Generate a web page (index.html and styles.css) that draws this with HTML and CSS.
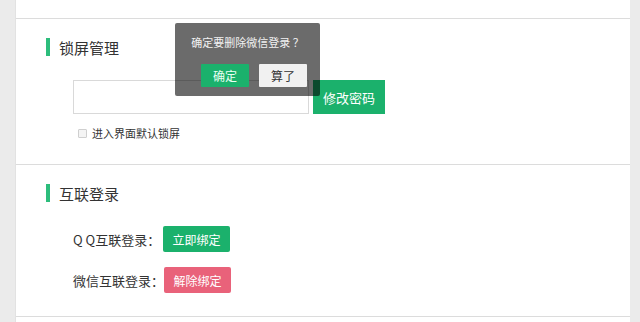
FILE: index.html
```html
<!DOCTYPE html>
<html lang="zh">
<head>
<meta charset="utf-8">
<link rel="stylesheet" href="styles.css">
</head>
<body>
<div class="page">
  <div class="main">
    <div class="top-block"></div>
    <section class="section s-lock">
      <h2 class="sec-title"><span class="bar"></span>锁屏管理</h2>
      <div class="sec-body">
        <div class="pwd-row">
          <input class="pwd-input" type="text">
          <button class="btn btn-green btn-big">修改密码</button>
        </div>
        <label class="chk-row"><span class="chk"></span>进入界面默认锁屏</label>
      </div>
    </section>
    <section class="section s-link">
      <h2 class="sec-title"><span class="bar"></span>互联登录</h2>
      <div class="sec-body">
        <div class="link-row">
          <span class="link-label">Q Q互联登录：</span>
          <button class="btn btn-green btn-small">立即绑定</button>
        </div>
        <div class="link-row row2">
          <span class="link-label">微信互联登录：</span>
          <button class="btn btn-red btn-small">解除绑定</button>
        </div>
      </div>
    </section>
  </div>
  <div class="popup">
    <p class="popup-text">确定要删除微信登录 ？</p>
    <div class="popup-btns">
      <button class="pbtn pbtn-ok">确定</button>
      <button class="pbtn pbtn-cancel">算了</button>
    </div>
  </div>
</div>
</body>
</html>
```

FILE: styles.css
```css
* { box-sizing: border-box; }
html, body { margin: 0; padding: 0; }
body {
  background: #ebebeb;
  font-family: "Noto Sans CJK SC", "Noto Sans", sans-serif;
  color: #333;
  width: 640px;
  height: 322px;
  overflow: hidden;
}
.page {
  position: relative;
  height: 322px;
  display: flex;
}
.main {
  height: 322px;
  background: #fff;
  border-left: 1px solid #e2e2e2;
  margin-left: 15px;
  width: 615px;
}
.top-block {
  height: 19px;
  border-bottom: 1px solid #dcdcdc;
}
.section {
  border-bottom: 1px solid #dcdcdc;
  padding-left: 30px;
}
.s-lock { height: 146px; padding-top: 19px; }
.s-link { height: 152px; padding-top: 19px; }
.sec-title {
  margin: 0;
  height: 18px;
  display: flex;
  align-items: center;
  font-size: 15px;
  font-weight: normal;
  color: #333;
}
.bar {
  width: 4px;
  height: 18px;
  background: #2dbd7c;
  margin-right: 9px;
}
.sec-body { padding-left: 27px; }
.pwd-row {
  margin-top: 24px;
  display: flex;
  gap: 4px;
}
.pwd-input {
  width: 236px;
  height: 34px;
  border: 1px solid #d9d9d9;
  margin: 0;
  padding: 0 6px;
  outline: none;
}
.btn {
  border: none;
  color: #fff;
  font-family: "Noto Sans CJK SC", sans-serif;
  padding: 0;
  margin: 0;
  flex-shrink: 0;
}
.btn-green { background: #1bb16c; }
.btn-red { background: #e9627a; }
.btn-big {
  width: 72px;
  height: 34px;
  font-size: 13px;
}
.btn-small {
  width: 67px;
  height: 26px;
  font-size: 12px;
  border-radius: 2px;
}
.chk-row {
  display: flex;
  align-items: center;
  margin-top: 12px;
  margin-left: 5px;
  font-size: 11px;
  color: #333;
  height: 14px;
}
.chk {
  width: 9px;
  height: 9px;
  border: 1px solid #cfcfcf;
  background: #f4f4f4;
  border-radius: 1px;
  margin-right: 5px;
}
.link-row {
  margin-top: 24px;
  display: flex;
  align-items: center;
  height: 26px;
}
.row2 { margin-top: 15px; }
.link-label {
  width: 90px;
  flex-shrink: 0;
  white-space: nowrap;
  font-size: 13px;
  color: #333;
}
.row2 .btn { margin-left: 1px; }
.popup {
  position: absolute;
  left: 175px;
  top: 23px;
  width: 145px;
  height: 73px;
  background: rgba(0, 0, 0, 0.58);
  border-radius: 2px;
}
.popup-text {
  margin: 12px 0 0;
  text-align: center;
  font-size: 11px;
  color: #f2f2f2;
  line-height: 14px;
  white-space: nowrap;
}
.popup-btns {
  display: flex;
  gap: 10px;
  margin-top: 15px;
  padding-left: 26px;
}
.pbtn {
  width: 48px;
  height: 23px;
  border: none;
  padding: 0;
  font-size: 12px;
  font-family: "Noto Sans CJK SC", sans-serif;
  border-radius: 1px;
}
.pbtn-ok { background: #1bb16c; color: #e9fff3; }
.pbtn-cancel { background: #f1f1f1; color: #333; }
```
